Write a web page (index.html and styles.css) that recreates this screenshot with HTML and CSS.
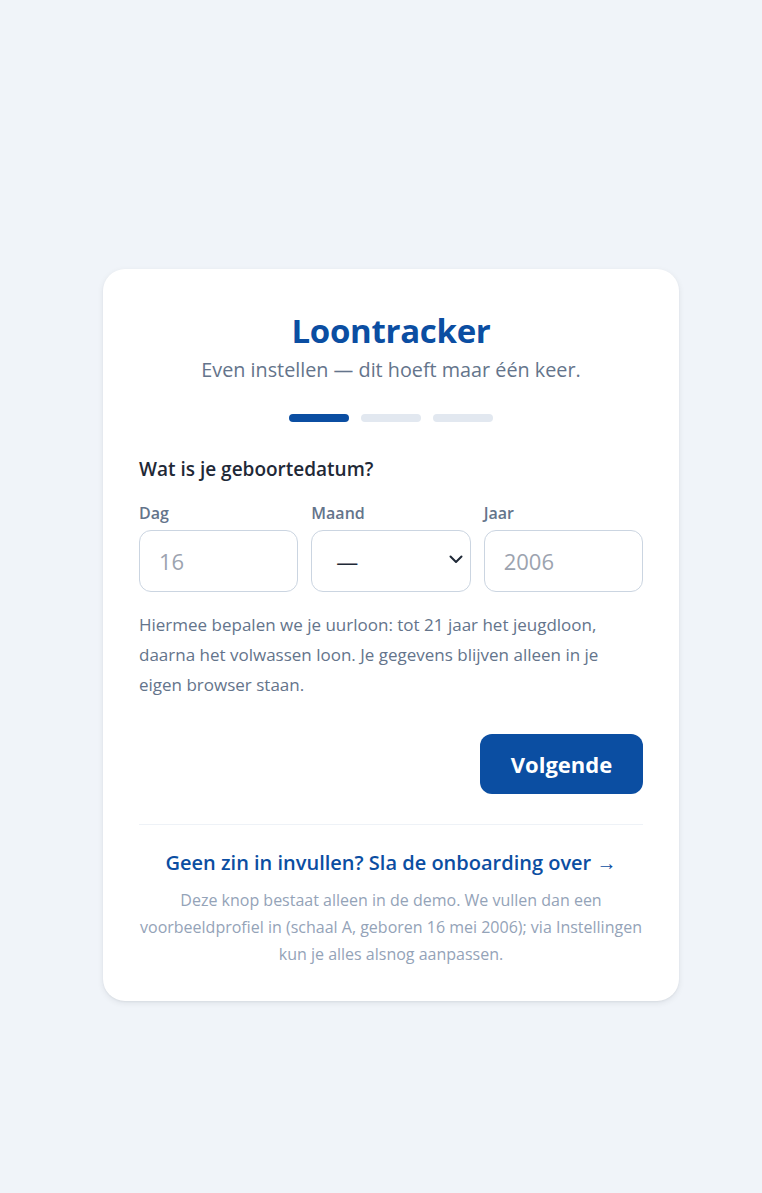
FILE: index.html
```html
<!DOCTYPE html>
<html lang="nl">
<head>
<meta charset="utf-8">
<title>Loontracker</title>
<link rel="stylesheet" href="styles.css">
</head>
<body>
<main class="page">
  <section class="card">
    <header class="head">
      <h1 class="title">Loontracker</h1>
      <p class="subtitle">Even instellen — dit hoeft maar één keer.</p>
      <div class="steps">
        <span class="step active"></span>
        <span class="step"></span>
        <span class="step"></span>
      </div>
    </header>
    <h2 class="question">Wat is je geboortedatum?</h2>
    <div class="fields">
      <label class="field">
        <span class="label">Dag</span>
        <input class="control" type="text" placeholder="16">
      </label>
      <label class="field">
        <span class="label">Maand</span>
        <span class="select-wrap">
          <select class="control select">
            <option>—</option>
          </select>
          <svg class="chevron" width="14" height="9" viewBox="0 0 14 9"><path d="M1.5 1.5 7 7l5.5-5.5" fill="none" stroke="#1f2937" stroke-width="2" stroke-linecap="round" stroke-linejoin="round"/></svg>
        </span>
      </label>
      <label class="field">
        <span class="label">Jaar</span>
        <input class="control" type="text" placeholder="2006">
      </label>
    </div>
    <p class="hint">Hiermee bepalen we je uurloon: tot 21 jaar het jeugdloon, daarna het volwassen loon. Je gegevens blijven alleen in je eigen browser staan.</p>
    <div class="actions">
      <button class="btn" type="button">Volgende</button>
    </div>
    <footer class="skip">
      <a class="skip-link" href="#">Geen zin in invullen? Sla de onboarding over →</a>
      <p class="skip-note">Deze knop bestaat alleen in de demo. We vullen dan een voorbeeldprofiel in (schaal A, geboren 16 mei 2006); via Instellingen kun je alles alsnog aanpassen.</p>
    </footer>
  </section>
</main>
</body>
</html>
```
FILE: styles.css
```css
* { box-sizing: border-box; }
html, body { margin: 0; padding: 0; }
body {
  background: #f0f4f9;
  font-family: "Open Sans", "Noto Sans", sans-serif;
  color: #1f2937;
}
.page {
  display: flex;
  justify-content: center;
  padding-top: 269px;
  padding-left: 20px;
  min-height: 1193px;
}
.card {
  width: 576px;
  align-self: flex-start;
  background: #fff;
  border-radius: 22px;
  box-shadow: 0 2px 6px rgba(15, 23, 42, 0.08), 0 1px 2px rgba(15, 23, 42, 0.05);
  padding: 40px 36px 33px;
}
.head { text-align: center; }
.title {
  margin: 0;
  font-size: 33px;
  font-weight: 700;
  line-height: 44px;
  color: #0b4ea2;
  letter-spacing: -0.3px;
}
.subtitle {
  margin: 4px 0 0;
  font-size: 19.8px;
  line-height: 26px;
  color: #64748b;
}
.steps {
  display: flex;
  justify-content: center;
  gap: 12px;
  margin-top: 31px;
}
.step {
  width: 60px;
  height: 8px;
  border-radius: 4px;
  background: #e2e8f0;
}
.step.active { background: #0b4ea2; }
.question {
  margin: 33px 0 0;
  font-size: 19px;
  line-height: 28px;
  font-weight: 600;
  color: #1f2937;
}
.fields {
  display: grid;
  grid-template-columns: repeat(3, 1fr);
  gap: 13px;
  margin-top: 19px;
}
.field { display: flex; flex-direction: column; }
.label {
  font-size: 16px;
  line-height: 22px;
  font-weight: 600;
  color: #64748b;
  margin-bottom: 6px;
}
.control {
  width: 100%;
  height: 62px;
  border: 1px solid #cbd5e1;
  border-radius: 12px;
  background: #fff;
  font-family: inherit;
  font-size: 22px;
  color: #1f2937;
  padding: 0 19px;
  outline: none;
}
.control::placeholder { color: #9ca3af; }
.select-wrap { position: relative; display: block; }
.select {
  appearance: none;
  -webkit-appearance: none;
  padding-left: 24px;
}
.chevron {
  position: absolute;
  right: 8px;
  top: 25px;
  pointer-events: none;
}
.hint {
  margin: 18px 0 0;
  font-size: 17px;
  line-height: 30px;
  color: #64748b;
}
.actions {
  display: flex;
  justify-content: flex-end;
  margin-top: 34px;
}
.btn {
  width: 163px;
  height: 60px;
  border: 0;
  border-radius: 12px;
  background: #0b4ea2;
  color: #fff;
  font-family: inherit;
  font-size: 22px;
  font-weight: 700;
}
.skip {
  margin-top: 30px;
  border-top: 1px solid #eef2f7;
  padding-top: 24px;
  text-align: center;
}
.skip-link {
  display: block;
  font-size: 20px;
  line-height: 28px;
  font-weight: 600;
  color: #0b4ea2;
  text-decoration: none;
}
.skip-note {
  margin: 10px 0 0;
  font-size: 16px;
  line-height: 27px;
  color: #94a3b8;
}
```
